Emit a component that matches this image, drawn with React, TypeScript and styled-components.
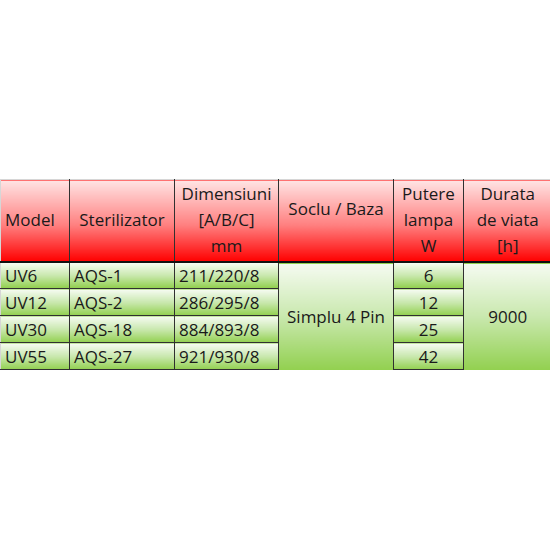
import React from 'react';
import styled, { createGlobalStyle } from 'styled-components';

const Global = createGlobalStyle`
  html, body {
    margin: 0;
    padding: 0;
    background: #ffffff;
  }
`;

const Page = styled.div`
  width: 550px;
  height: 550px;
  padding-top: 179px;
  box-sizing: border-box;
  overflow: hidden;
`;

const Table = styled.table`
  width: 551px;
  table-layout: fixed;
  border-collapse: collapse;
  font-family: 'Open Sans', 'Noto Sans', sans-serif;
  font-size: 17px;
  color: #1a1a1a;
  border-top: 1px solid #d6d6d6;
  border-left: 1px solid #d6d6d6;
`;

const Th = styled.th<{ align?: 'left' | 'center'; lift?: boolean }>`
  box-sizing: border-box;
  height: 82px;
  padding: ${({ lift }) => (lift ? '3px 4px 0' : '0 4px')};
  font-weight: normal;
  line-height: 26px;
  white-space: nowrap;
  text-align: ${({ align }) => align || 'center'};
  vertical-align: ${({ lift }) => (lift ? 'top' : 'middle')};
  background: linear-gradient(to bottom, #ffe4e4 0%, #ff8080 55%, #ff0000 100%);
  border-right: 1px solid #303030;
  border-bottom: 2px solid #111;
  &:last-child {
    border-right: none;
  }
`;

const Td = styled.td<{ align?: 'left' | 'center' }>`
  box-sizing: border-box;
  height: 27px;
  padding: 0 4px;
  line-height: 25px;
  white-space: nowrap;
  text-align: ${({ align }) => align || 'left'};
  vertical-align: middle;
  background: linear-gradient(to bottom, #f6fbf2 0%, #c9e8ae 50%, #92d050 100%);
  border-right: 1px solid #303030;
  border-bottom: 1px solid #303030;
`;

const MergedTd = styled(Td)`
  text-align: center;
  border-bottom: none;
  &:last-child {
    border-right: none;
  }
`;

const Soclu = styled.div`
  padding-top: 13px;
`;

const rows = [
  { model: 'UV6', sterilizator: 'AQS-1', dim: '211/220/8', power: '6' },
  { model: 'UV12', sterilizator: 'AQS-2', dim: '286/295/8', power: '12' },
  { model: 'UV30', sterilizator: 'AQS-18', dim: '884/893/8', power: '25' },
  { model: 'UV55', sterilizator: 'AQS-27', dim: '921/930/8', power: '42' },
];

const widths = [69, 105, 104, 115, 70, 88];

export default function App() {
  return (
    <Page>
      <Global />
      <Table>
        <colgroup>
          {widths.map((w, i) => (
            <col key={i} style={{ width: w }} />
          ))}
        </colgroup>
        <thead>
          <tr>
            <Th align="left">Model</Th>
            <Th>Sterilizator</Th>
            <Th>
              Dimensiuni
              <br />
              [A/B/C]
              <br />
              mm
            </Th>
            <Th lift>
              <Soclu>Soclu / Baza</Soclu>
            </Th>
            <Th>
              Putere
              <br />
              lampa
              <br />W
            </Th>
            <Th>
              Durata
              <br />
              de viata
              <br />
              [h]
            </Th>
          </tr>
        </thead>
        <tbody>
          {rows.map((r, idx) => (
            <tr key={r.model}>
              <Td>{r.model}</Td>
              <Td>{r.sterilizator}</Td>
              <Td>{r.dim}</Td>
              {idx === 0 && <MergedTd rowSpan={4}>Simplu 4 Pin</MergedTd>}
              <Td align="center">{r.power}</Td>
              {idx === 0 && <MergedTd rowSpan={4}>9000</MergedTd>}
            </tr>
          ))}
        </tbody>
      </Table>
    </Page>
  );
}
